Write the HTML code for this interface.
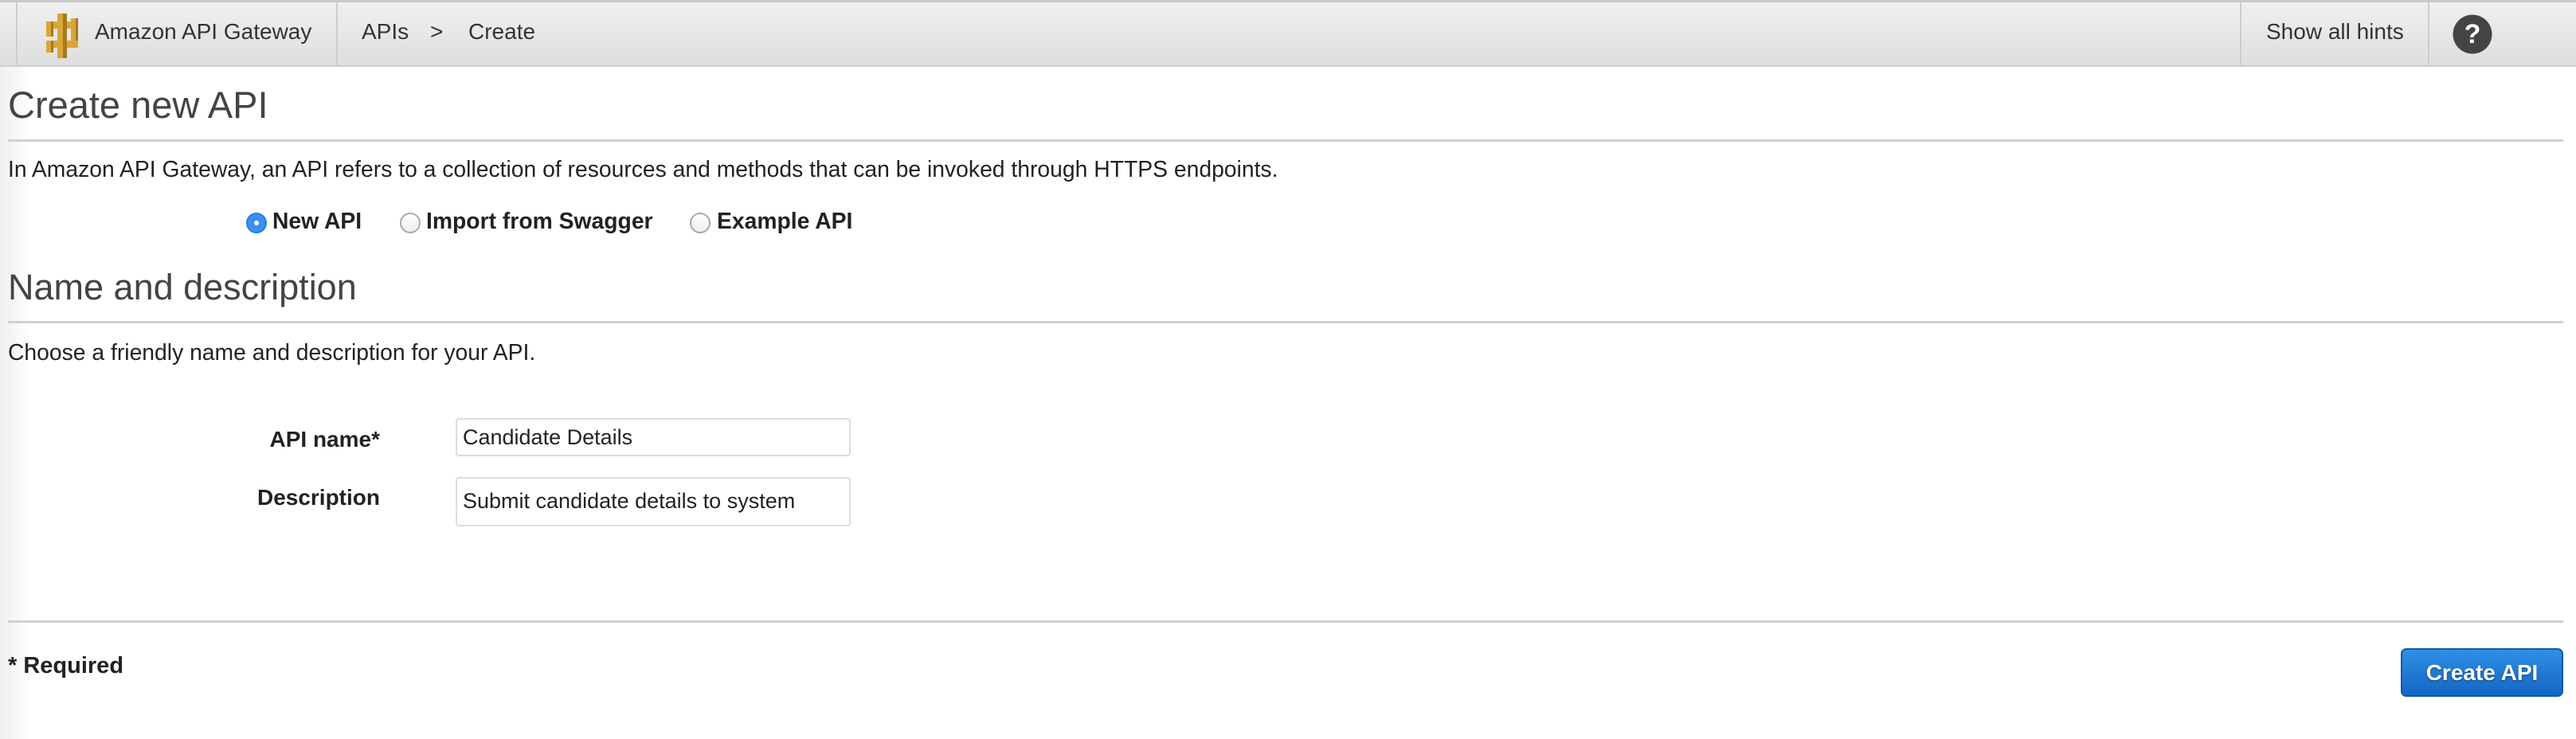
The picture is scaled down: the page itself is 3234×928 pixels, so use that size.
<!DOCTYPE html>
<html><head><meta charset="utf-8"><style>
*{margin:0;padding:0;box-sizing:border-box}
html,body{width:3234px;height:928px;overflow:hidden}
body{position:relative;font-family:"Liberation Sans",Arial,sans-serif;color:#333;background:linear-gradient(to right,#efefef 0,#fff 40px)}
.a{position:absolute;white-space:nowrap}
.hdr{position:absolute;left:0;top:0;width:3234px;height:84px;background:linear-gradient(#f0f0f0,#dedede);border-top:3px solid #c9c9c9;border-bottom:2px solid #cfcfcf}
.vd{position:absolute;top:3px;width:2px;height:79px;background:#cdcdcd}
.hr{position:absolute;left:10px;width:3208px;height:3px;background:#d0d0d0}
.h1{color:#444}
.p{font-size:28.3px;color:#222}
.rad{position:absolute;width:26px;height:26px;border-radius:50%;border:2px solid #aaa;background:linear-gradient(#fff,#eee)}
.rl{font-size:28.3px;font-weight:bold;color:#222}
.lbl{font-size:28px;font-weight:bold;color:#222;text-align:right}
.inp{position:absolute;left:572px;width:496px;border:2px solid #ddd;border-radius:4px;background:#fff;font-size:27px;color:#222;padding-left:7px}
.btn{position:absolute;left:3014px;top:814px;width:204px;height:61px;border-radius:7px;background:linear-gradient(#2f8fe6,#1366c4);border:2px solid #1058a8;color:#fff;font-weight:bold;font-size:28px;text-align:center;line-height:57px;text-shadow:0 1px 2px rgba(0,0,0,.5)}
</style></head><body>
<div class="hdr"></div>
<div class="vd" style="left:20px"></div>
<div class="vd" style="left:422px"></div>
<div class="vd" style="left:2812px"></div>
<div class="vd" style="left:3048px"></div>
<svg class="a" style="left:54px;top:15px" width="48" height="60" viewBox="0 0 48 60">
<g fill="#d9a63a">
<rect x="18" y="2" width="12" height="56"/>
<rect x="4" y="12" width="40" height="9"/>
<rect x="4" y="36" width="40" height="9"/>
<rect x="4" y="12" width="9" height="19"/>
<rect x="35" y="21" width="9" height="15"/>
<rect x="4" y="36" width="9" height="15"/>
<rect x="35" y="8" width="9" height="13"/>
</g>
<g fill="#a87a1e"><rect x="25" y="2" width="5" height="56"/><rect x="10" y="12" width="3" height="19"/><rect x="41" y="21" width="3" height="15"/><rect x="10" y="36" width="3" height="15"/><rect x="41" y="8" width="3" height="13"/></g>
</svg>
<div class="a" style="left:119px;top:24px;font-size:28px;color:#333">Amazon API Gateway</div>
<div class="a" style="left:454px;top:24px;font-size:28px;color:#333">APIs</div>
<div class="a" style="left:540px;top:24px;font-size:28px;color:#333">&gt;</div>
<div class="a" style="left:588px;top:24px;font-size:28px;color:#333">Create</div>
<div class="a" style="left:2845px;top:24px;font-size:28px;color:#333">Show all hints</div>
<svg class="a" style="left:3079px;top:18px" width="50" height="50" viewBox="0 0 50 50"><circle cx="25" cy="25" r="24.5" fill="#444"/><text x="25" y="36" text-anchor="middle" font-family="Liberation Sans" font-weight="bold" font-size="34" fill="#fff">?</text></svg>

<div class="a h1" style="left:10px;top:104px;font-size:47px">Create new API</div>
<div class="hr" style="top:175px"></div>
<div class="a p" style="left:10px;top:196px">In Amazon API Gateway, an API refers to a collection of resources and methods that can be invoked through HTTPS endpoints.</div>

<div class="rad" style="left:309px;top:267px;border-color:#2a7fe0;background:#3b8ff0"><div style="position:absolute;left:8px;top:8px;width:6px;height:6px;border-radius:50%;background:#fff"></div></div>
<div class="a rl" style="left:342px;top:261px">New API</div>
<div class="rad" style="left:502px;top:267px"></div>
<div class="a rl" style="left:535px;top:261px">Import from Swagger</div>
<div class="rad" style="left:866px;top:267px"></div>
<div class="a rl" style="left:900px;top:261px">Example API</div>

<div class="a h1" style="left:10px;top:335px;font-size:45px">Name and description</div>
<div class="hr" style="top:403px"></div>
<div class="a p" style="left:10px;top:426px">Choose a friendly name and description for your API.</div>

<div class="a lbl" style="left:200px;width:277px;top:536px">API name*</div>
<div class="inp" style="top:525px;height:48px;line-height:44px">Candidate Details</div>
<div class="a lbl" style="left:200px;width:277px;top:609px">Description</div>
<div class="inp" style="top:599px;height:62px;line-height:56px">Submit candidate details to system</div>

<div class="hr" style="top:779px"></div>
<div class="a lbl" style="left:10px;top:820px;text-align:left;font-size:29px">* Required</div>
<div class="btn">Create API</div>
</body></html>
